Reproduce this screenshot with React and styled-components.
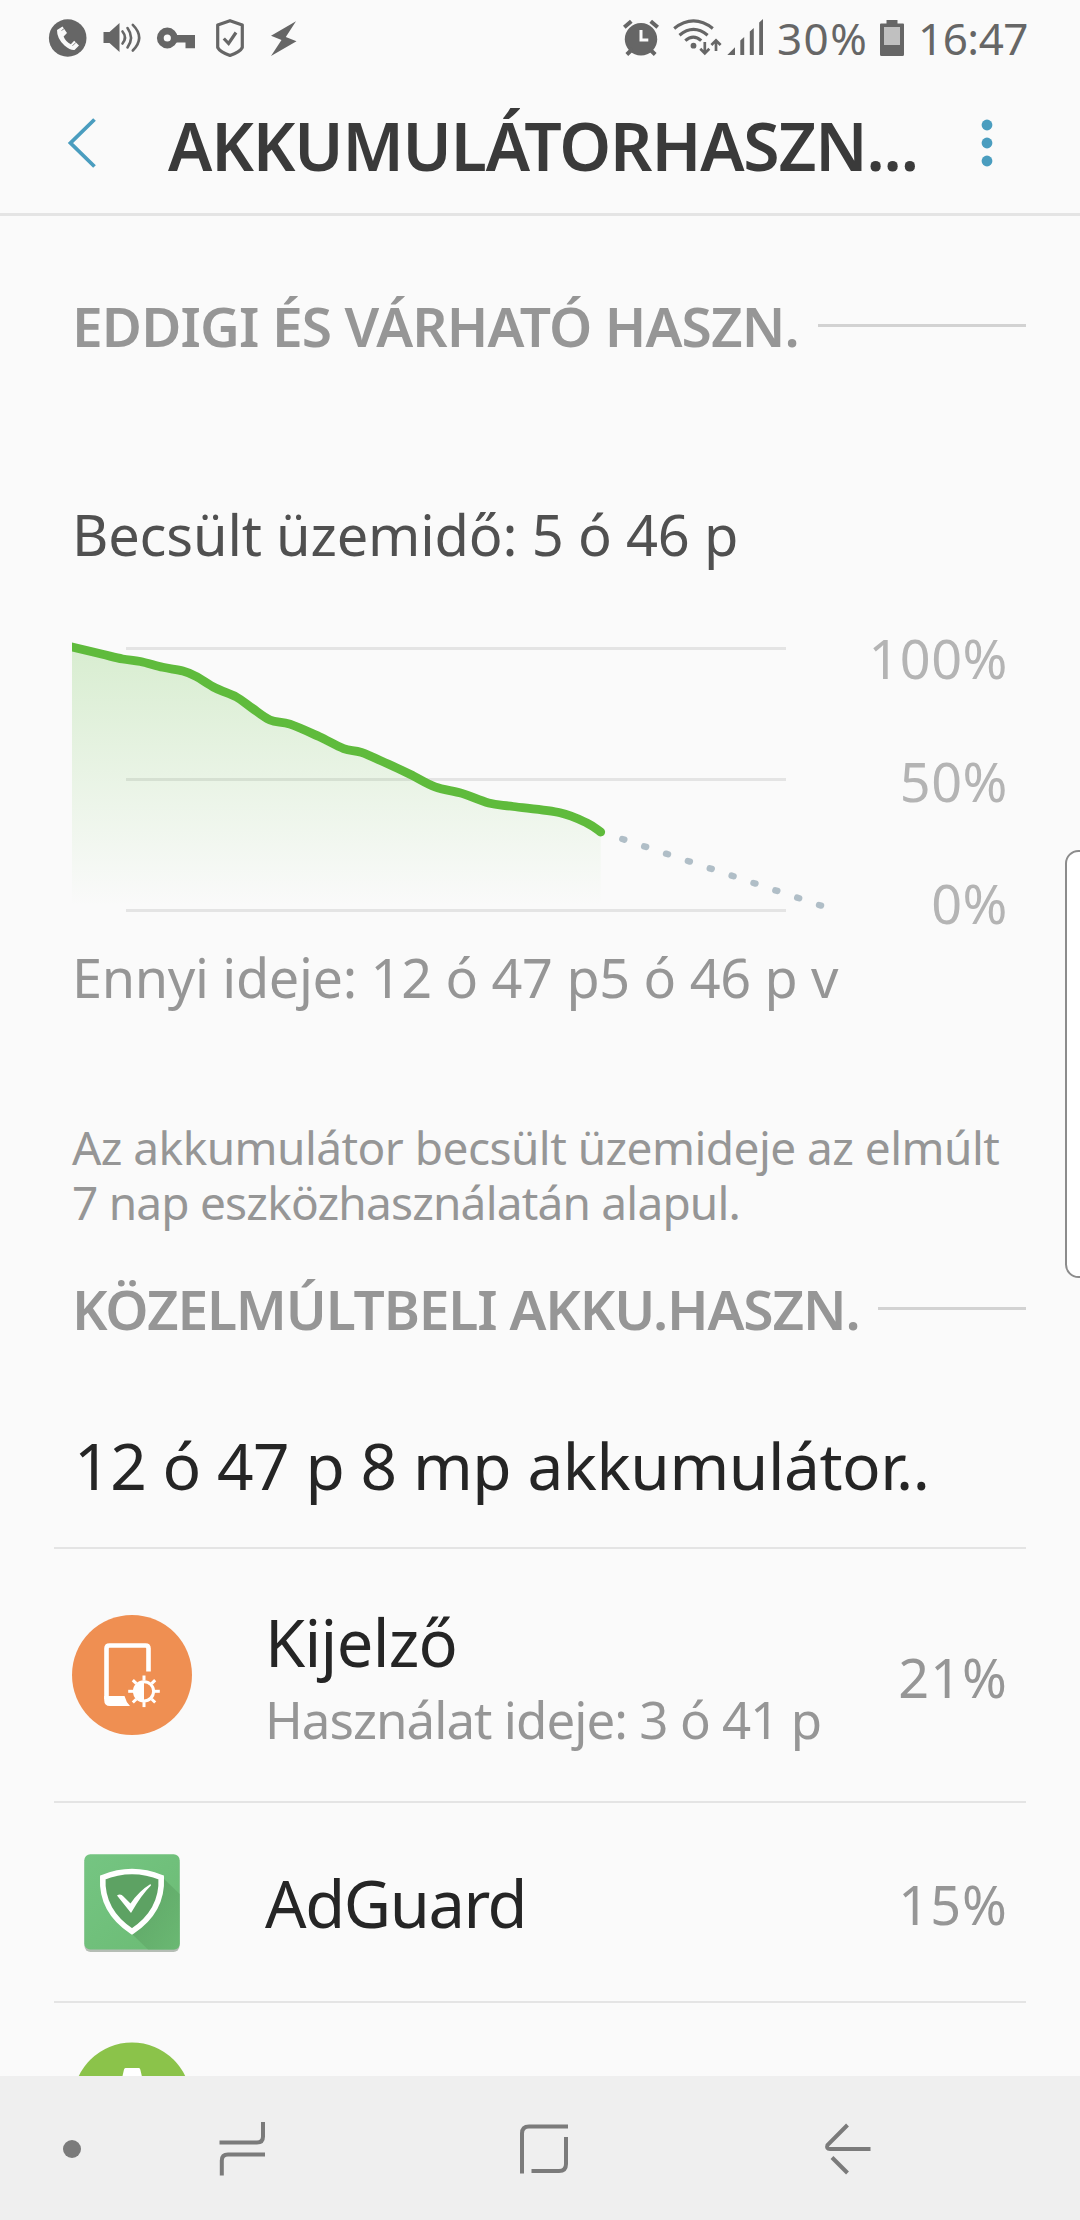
import styled, { createGlobalStyle } from "styled-components";

const GlobalStyle = createGlobalStyle`
  * {
    box-sizing: border-box;
  }

  body {
    margin: 0;
    background-color: #fafafa;
    font-family: "Noto Sans", "Open Sans", sans-serif;
  }
`
const Screen = styled.div`
  position: relative;
  width: 1080px;
  height: 2220px;
  display: flex;
  flex-direction: column;
  overflow: hidden;
  background-color: #fafafa;
  white-space: nowrap;
`
const StyledStatusBar = styled.div`
  height: 75px;
  padding: 0 54px 0 48px;
  display: flex;
  align-items: center;
  justify-content: space-between;
  color: #666666;

  & svg {
    display: block;
  }
`
const StatusGroup = styled.div`
  display: flex;
  align-items: center;
`
const StatusText = styled.span`
  width: ${(props) => props.$width}px;
  margin-left: ${(props) => props.$left}px;
  font-size: 44px;
  line-height: 60px;
  letter-spacing: ${(props) => props.$spacing}px;
`
const StyledHeader = styled.div`
  height: 141px;
  padding: 0 87px 3px 66px;
  border-bottom: 3px solid #e4e4e4;
  display: flex;
  align-items: center;
`
const Title = styled.h1`
  flex: 1;
  margin: 4px 0 0 71px;
  font-size: 66px;
  font-weight: 600;
  line-height: 90px;
  letter-spacing: ${(props) => props.$spacing}px;
  color: #3a3a3a;
`
const IconButton = styled.button`
  border: none;
  padding: 1px 0 0;
  background: none;
  display: flex;
`
const Content = styled.div`
  flex: 1;
  min-height: 0;
  padding: 0 54px;
  overflow: hidden;
`
const StyledSection = styled.div`
  height: 59px;
  margin-top: ${(props) => props.$top}px;
  padding-left: 18px;
  display: flex;
  align-items: center;
`
const SectionTitle = styled.h2`
  width: ${(props) => props.$width}px;
  margin: 0;
  font-size: 55px;
  font-weight: 600;
  line-height: 59px;
  letter-spacing: ${(props) => props.$spacing}px;
  color: #969696;
`
const SectionLine = styled.div`
  flex: 1;
  height: 3px;
  background-color: #d2d2d2;
`
const Estimate = styled.div`
  margin-top: 149px;
  padding-left: 18px;
  font-size: 56px;
  line-height: 60px;
  letter-spacing: ${(props) => props.$spacing}px;
  color: #505050;
`
const ChartRow = styled.div`
  height: 301px;
  margin-top: 66px;
  padding: 0 18px;
  display: flex;
  justify-content: space-between;
`
const ChartLabels = styled.div`
  display: flex;
  flex-direction: column;
  justify-content: space-between;
  text-align: right;
  font-size: 54px;
  line-height: 56px;
  letter-spacing: 0.5px;
  color: #b4b4b4;
`
const Elapsed = styled.div`
  margin-top: 16px;
  padding-left: 18px;
  font-size: 54px;
  line-height: 60px;
  letter-spacing: ${(props) => props.$spacing}px;
  color: #969696;
`
const Note = styled.p`
  margin: 113px 0 0;
  padding-left: 18px;
  font-size: 46px;
  line-height: 55px;
  color: #969696;
`
const NoteLine = styled.span`
  display: block;
  letter-spacing: ${(props) => props.$spacing}px;
`
const ListTitle = styled.div`
  margin: 88px 0 41px;
  padding-left: 20px;
  font-size: 64px;
  line-height: 80px;
  letter-spacing: ${(props) => props.$spacing}px;
  color: #252525;
`
const StyledRow = styled.div`
  height: ${(props) => props.$height}px;
  padding: 0 18px;
  border-top: 2px solid #e4e4e4;
  display: flex;
  align-items: center;

  & > svg {
    flex: none;
  }
`
const RowTexts = styled.div`
  flex: 1;
  margin-left: 73px;
  padding-top: ${(props) => props.$shift}px;
`
const RowName = styled.div`
  font-size: 65px;
  line-height: 82px;
  letter-spacing: ${(props) => props.$spacing}px;
  color: #252525;
`
const RowInfo = styled.div`
  font-size: 51px;
  line-height: 73px;
  letter-spacing: ${(props) => props.$spacing}px;
  color: #969696;
`
const RowPercent = styled.div`
  padding-top: 3px;
  font-size: 54px;
  line-height: 60px;
  letter-spacing: 1px;
  color: #969696;
`
const StyledNavBar = styled.div`
  height: 144px;
  padding-left: 63px;
  display: flex;
  align-items: center;
  background-color: #efefef;
`
const NavButton = styled.button`
  margin-left: ${(props) => props.$left || 0}px;
  padding: 0;
  border: none;
  background: none;
  display: flex;
`
/* handle of the edge panel, lies over the page */
const EdgeHandle = styled.div`
  position: absolute;
  top: 850px;
  right: -12px;
  width: 27px;
  height: 428px;
  border: 2px solid #8c8c8c;
  border-radius: 20px;
  background-color: #ffffff;
`

const levels = [
  [0, 17], [30.5, 24.3], [50.6, 29], [68.4, 31.5], [90.8, 37.3], [110.9, 41],
  [124, 46.3], [143.4, 58], [164.4, 67], [180, 78], [198, 90], [218, 94.2],
  [247, 106.6], [271.6, 118.6], [289.4, 122.4], [316.2, 134.1], [338.5, 144.5],
  [363, 156.9], [389.9, 163.4], [416.7, 173], [441.2, 176.5], [488, 182.7],
  [514.9, 193], [528.7, 202],
]

// smooth line through all the points
function smooth(points) {
  let d = `M${points[0][0]} ${points[0][1]}`
  for (let i = 0; i < points.length - 1; i++) {
    const a = points[i - 1] || points[i]
    const b = points[i]
    const c = points[i + 1]
    const e = points[i + 2] || c
    d += ` C${b[0] + (c[0] - a[0]) / 6} ${b[1] + (c[1] - a[1]) / 6}`
    d += ` ${c[0] - (e[0] - b[0]) / 6} ${c[1] - (e[1] - b[1]) / 6} ${c[0]} ${c[1]}`
  }
  return d
}

function BatteryChart() {
  const line = smooth(levels)
  const dots = Array.from({ length: 10 }, (_, i) => [551.3 + i * 21.86, 209.3 + i * 7.33])

  return (
    <svg width="760" height="301" viewBox="0 0 760 301">
      <defs>
        <linearGradient id="level" x1="0" y1="17" x2="0" y2="276" gradientUnits="userSpaceOnUse">
          <stop offset="0" stopColor="#5fbf3c" stopOpacity="0.22" />
          <stop offset="1" stopColor="#5fbf3c" stopOpacity="0" />
        </linearGradient>
      </defs>
      {[17, 148, 279].map((y) => (
        <rect key={y} x="54" y={y} width="660" height="3" fill="#e4e4e4" />
      ))}
      <path d={`${line} V276 H0 Z`} fill="url(#level)" />
      <path d={line} fill="none" stroke="#5fbb3c" strokeWidth="8.8" strokeLinecap="round" />
      {dots.map(([x, y]) => (
        <path key={x} d={`M${x - 1} ${y - 0.3} l2 0.6`} stroke="#b0bec7" strokeWidth="6.4" strokeLinecap="round" />
      ))}
    </svg>
  )
}

function NoticeIcons() {
  return (
    <StatusGroup>
      <svg width="252" height="40" viewBox="48 17 252 40" fill="none" stroke="#666666">
        <circle cx="67.7" cy="37" r="18.8" fill="#666666" stroke="none" />
        <path d="M57 29 L62.5 25.5 L67 32 L63.6 35.5 Q65.5 40.5 70.8 43.3 L74.2 39.8 L79 44.4 L74.5 49 Q70.5 49.5 64.5 44.5 Q56.8 37.5 57 29Z" fill="#fafafa" stroke="none" />
        <path d="M61.5 29.5 L65.5 26.7 M72.5 44.8 L76 41.3" stroke="#666666" strokeWidth="0.8" />
        <path d="M103.5 31 H109.5 L119.5 22 V51 L109.5 42 H103.5Z" fill="#666666" stroke="none" />
        <path d="M122.5 30.5 Q127.5 36.5 122.5 42.5 M127.5 27 Q134.5 36.5 127.5 46.5 M132.8 23.8 Q145.5 36.5 132.8 49.5" strokeWidth="2.6" strokeLinecap="round" />
        <circle cx="167.3" cy="37" r="7" strokeWidth="6.8" />
        <path d="M176 34 H195 V47.3 H185.5 V41.5 H176Z" fill="#666666" stroke="none" />
        <path d="M230 19.7 L242.3 24 V46.5 Q240 51 230 54.5 Q220 51 217.7 46.5 V24Z" strokeWidth="3.2" strokeLinejoin="round" />
        <path d="M223.8 37.5 L228.6 42.5 L236 31.5" strokeWidth="3.2" />
        <path d="M296 20.3 L271 34.7 L281.5 39 L271 55 L296.5 40.3 L285.8 36Z" fill="#666666" stroke="none" />
      </svg>
    </StatusGroup>
  )
}

function SystemIcons() {
  return (
    <svg width="142" height="40" viewBox="622 17 142 40" fill="none" stroke="#666666">
      <circle cx="641" cy="38.3" r="16.2" fill="#666666" stroke="none" />
      <path d="M641 29 V39 H648.3" stroke="#fafafa" strokeWidth="3" />
      <path d="M624.3 26.2 L631.3 20.2 M657.7 26.2 L650.7 20.2" strokeWidth="4" />
      <path d="M626.8 53.5 L632.5 48 M655.2 53.5 L649.5 48" strokeWidth="4" />
      <path d="M674.2 27.4 Q693.5 12.4 712.8 27.4 M679.5 34.3 Q693.5 22.6 707.6 34.3 M685.3 39.6 Q693.3 32.6 701.2 39.6" strokeWidth="3.2" />
      <circle cx="693.5" cy="44.7" r="2.9" fill="#666666" stroke="none" />
      <path d="M704.8 41 V52.5 M700.3 47.8 L704.8 52.4 L709.3 47.8 M716 50 V39 M711.4 44 L716 39.4 L720.6 44" strokeWidth="2.7" />
      <path d="M727.3 54 L735 46.3 V54Z M740.3 54 V39.6 L744.2 36 V54Z M749.8 54 V30.5 L753.8 27 V54Z M759.2 54 V21.5 L763 18 V54Z" fill="#666666" stroke="none" />
    </svg>
  )
}

function StatusBar() {
  return (
    <StyledStatusBar>
      <NoticeIcons />
      <StatusGroup>
        <SystemIcons />
        <StatusText $width={103} $left={13} $spacing={1.4}>30%</StatusText>
        <svg width="24" height="36" viewBox="0 0 24 36">
          <path d="M6.5 0 H17.5 V3.5 H23 Q24 3.5 24 4.5 V34.5 Q24 36 22.5 36 H1.5 Q0 36 0 34.5 V4.5 Q0 3.5 1 3.5 H6.5Z" fill="#666666" />
          <rect x="4" y="7" width="16" height="18" fill="#c0c0c0" />
        </svg>
        <StatusText $width={108} $left={14} $spacing={-0.5}>16:47</StatusText>
      </StatusGroup>
    </StyledStatusBar>
  )
}

function Header() {
  return (
    <StyledHeader>
      <IconButton>
        <svg width="31" height="50" viewBox="0 0 31 50" fill="none" stroke="#4a9dbf" strokeWidth="3.8">
          <path d="M28.5 1.5 L4.5 25 L28.5 48.5" />
        </svg>
      </IconButton>
      <Title $spacing={-1.15}>AKKUMULÁTORHASZN...</Title>
      <IconButton>
        <svg width="12" height="48" viewBox="0 0 12 48" fill="#4a9dbf">
          <circle cx="6" cy="6" r="5.4" />
          <circle cx="6" cy="24" r="5.4" />
          <circle cx="6" cy="42" r="5.4" />
        </svg>
      </IconButton>
    </StyledHeader>
  )
}

function Section({ top, width, spacing, children }) {
  return (
    <StyledSection $top={top}>
      <SectionTitle $width={width} $spacing={spacing}>{children}</SectionTitle>
      <SectionLine />
    </StyledSection>
  )
}

function DisplayIcon() {
  const rays = [0, 45, 90, 135, 180, 225, 270, 315]

  return (
    <svg width="120" height="120" viewBox="0 0 120 120">
      <circle cx="60" cy="60" r="60" fill="#ef8f52" />
      <path d="M76.5 56.5 V33.5 Q76.5 30.5 73.5 30.5 H37.5 Q34.5 30.5 34.5 33.5 V84" fill="none" stroke="#fff" strokeWidth="4.6" />
      <path d="M32.2 81 H52.5 Q54 87 58 91 H38 Q32.2 91 32.2 85Z" fill="#fff" />
      <circle cx="72" cy="76.3" r="9.6" fill="none" stroke="#fff" strokeWidth="3" />
      <path d="M72 66 A10.3 10.3 0 0 0 72 86.6Z" fill="#fff" />
      {rays.map((angle) => (
        <path key={angle} d="M72 65.5 V60.5" stroke="#fff" strokeWidth="3" transform={`rotate(${angle} 72 76.3)`} />
      ))}
    </svg>
  )
}

function AdGuardIcon() {
  return (
    <svg width="120" height="120" viewBox="0 0 120 120">
      <defs>
        <linearGradient id="tile" x1="0" y1="0" x2="1" y2="1">
          <stop offset="0" stopColor="#75c582" />
          <stop offset="1" stopColor="#6bbb74" />
        </linearGradient>
        <linearGradient id="cast" x1="0" y1="0" x2="1" y2="1">
          <stop offset="0" stopColor="#56985c" />
          <stop offset="1" stopColor="#6ab772" />
        </linearGradient>
      </defs>
      <rect x="12.5" y="14.5" width="95" height="95.5" rx="6" fill="#b5bdb5" />
      <rect x="12.3" y="12.2" width="95.4" height="95.4" rx="6" fill="url(#tile)" />
      <path d="M91 36 L107.7 52 V101.6 Q107.7 107.6 101.7 107.6 H76 L59 91Z" fill="url(#cast)" opacity="0.7" />
      <path d="M30.8 35.5 Q60 23.5 89.2 35.5 Q91 69 60 89.5 Q29 69 30.8 35.5Z" fill="#5da263" stroke="#fff" strokeWidth="5.6" />
      <path d="M45 53.5 Q48.5 51 51.5 54.5 L58.5 61.5 Q67 49 78.5 42 L79 43.5 Q70 52 59 71Z" fill="#fff" />
    </svg>
  )
}

function BatteryAppIcon() {
  return (
    <svg width="120" height="120" viewBox="0 0 120 120">
      <circle cx="60" cy="59.5" r="59" fill="#8bc34a" />
      <path d="M53.5 26 H67 Q68 26 68.3 27.5 L76 60 H44.5 L52 27.5 Q52.3 26 53.5 26Z" fill="#fff" />
    </svg>
  )
}

function Row({ icon, name, nameSpacing, info, percent, height }) {
  return (
    <StyledRow $height={height}>
      {icon}
      <RowTexts $shift={info ? 7 : 1}>
        <RowName $spacing={nameSpacing}>{name}</RowName>
        {info && <RowInfo $spacing={-0.95}>{info}</RowInfo>}
      </RowTexts>
      <RowPercent>{percent}</RowPercent>
    </StyledRow>
  )
}

function NavBar() {
  return (
    <StyledNavBar>
      <svg width="18" height="54" viewBox="0 0 18 54">
        <circle cx="9" cy="28" r="9" fill="#7b7b7b" />
      </svg>
      <NavButton $left={138}>
        <svg width="47" height="56" viewBox="219 2120 47 56" fill="none" stroke="#7b7b7b" strokeWidth="4">
          <path d="M219.5 2142.5 H257 Q263 2142.5 263 2136.5 V2122" />
          <path d="M265 2154.5 H228 Q221.8 2154.5 221.8 2160.5 V2175.5" />
        </svg>
      </NavButton>
      <NavButton $left={253}>
        <svg width="51" height="56" viewBox="519 2120 51 56" fill="none" stroke="#7b7b7b" strokeWidth="4">
          <path d="M568 2126.5 H529 Q522 2126.5 522 2133.5 V2173.5" />
          <path d="M566 2137 V2164 Q566 2171 559 2171 H531.5" />
        </svg>
      </NavButton>
      <NavButton $left={253}>
        <svg width="50" height="56" viewBox="823 2120 50 56" fill="none" stroke="#7b7b7b" strokeWidth="4">
          <path d="M847.5 2125 L827.5 2145 Q826 2149 830 2149 H870.5" />
          <path d="M832 2157.5 L847.5 2173" />
        </svg>
      </NavButton>
    </StyledNavBar>
  )
}

function App() {
  return (
    <>
      <GlobalStyle />
      <Screen>
        <StatusBar />
        <Header />
        <Content>
          <Section top={80} width={746} spacing={-0.88}>EDDIGI ÉS VÁRHATÓ HASZN.</Section>
          <Estimate $spacing={-0.18}>Becsült üzemidő: 5 ó 46 p</Estimate>
          <ChartRow>
            <BatteryChart />
            <ChartLabels>
              <span>100%</span>
              <span>50%</span>
              <span>0%</span>
            </ChartLabels>
          </ChartRow>
          <Elapsed $spacing={-0.32}>Ennyi ideje: 12 ó 47 p5 ó 46 p v</Elapsed>
          <Note>
            <NoteLine $spacing={-0.54}>Az akkumulátor becsült üzemideje az elmúlt</NoteLine>
            <NoteLine $spacing={-0.8}>7 nap eszközhasználatán alapul.</NoteLine>
          </Note>
          <Section top={49} width={806} spacing={-1.15}>KÖZELMÚLTBELI AKKU.HASZN.</Section>
          <ListTitle $spacing={-0.45}>12 ó 47 p 8 mp akkumulátor..</ListTitle>
          <Row icon={<DisplayIcon />} name="Kijelző" nameSpacing={-0.7} info="Használat ideje: 3 ó 41 p" percent="21%" height={254} />
          <Row icon={<AdGuardIcon />} name="AdGuard" nameSpacing={-1.4} percent="15%" height={200} />
          <Row icon={<BatteryAppIcon />} height={200} />
        </Content>
        <NavBar />
        <EdgeHandle />
      </Screen>
    </>
  )
}

export default App
